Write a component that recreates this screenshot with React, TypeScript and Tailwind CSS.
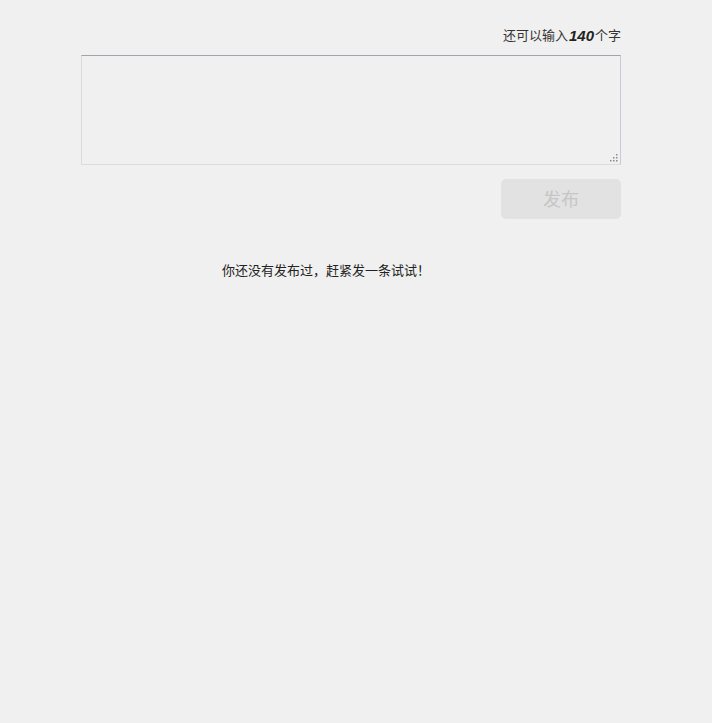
import React, { useState } from "react";

const font = { fontFamily: '"Liberation Sans", "Noto Sans CJK SC", sans-serif' };

export default function App() {
  const [text, setText] = useState("");
  const left = 140 - text.length;

  return (
    <div className="min-h-[723px] w-full bg-[#f0f0f0]" style={font}>
      <div className="ml-[81px] flex w-[540px] flex-col pt-[27px]">
        {/* Counter */}
        <div className="flex h-[18px] items-center justify-end text-[13px] leading-[18px] text-[#333]">
          <span>还可以输入</span>
          <span className="mx-[1px] text-[15px] font-bold italic text-[#222]">{left}</span>
          <span>个字</span>
        </div>

        {/* Textarea */}
        <div className="relative mt-[10px] h-[110px] w-full">
          <textarea
            value={text}
            onChange={(e) => setText(e.target.value.slice(0, 140))}
            className="block h-full w-full resize-none border border-b-[#dcdcdc] border-l-[#dcdcdc] border-r-[#c9c9e0] border-t-[#a3a3ad] bg-[#f0f0f0] p-2 text-[14px] text-[#333] outline-none"
          />
          <svg className="pointer-events-none absolute bottom-[3px] right-[3px]" width="8" height="8" viewBox="0 0 8 8">
            <rect x="6" y="0" width="1.5" height="1.5" fill="#8a8a8a" />
            <rect x="3" y="3" width="1.5" height="1.5" fill="#8a8a8a" />
            <rect x="6" y="3" width="1.5" height="1.5" fill="#8a8a8a" />
            <rect x="0" y="6" width="1.5" height="1.5" fill="#8a8a8a" />
            <rect x="3" y="6" width="1.5" height="1.5" fill="#8a8a8a" />
            <rect x="6" y="6" width="1.5" height="1.5" fill="#8a8a8a" />
          </svg>
        </div>

        {/* Publish */}
        <div className="mt-[14px] flex justify-end">
          <button
            disabled={text.length === 0}
            className="h-[40px] w-[120px] rounded-[5px] bg-[#e2e2e2] pt-[3px] text-[18px] text-[#c6c6c6]"
          >
            发布
          </button>
        </div>

        {/* Empty state */}
        <div className="mt-[42px] pl-[141px] text-[13px] leading-[20px] text-[#222]">
          你还没有发布过，赶紧发一条试试！
        </div>
      </div>
    </div>
  );
}
